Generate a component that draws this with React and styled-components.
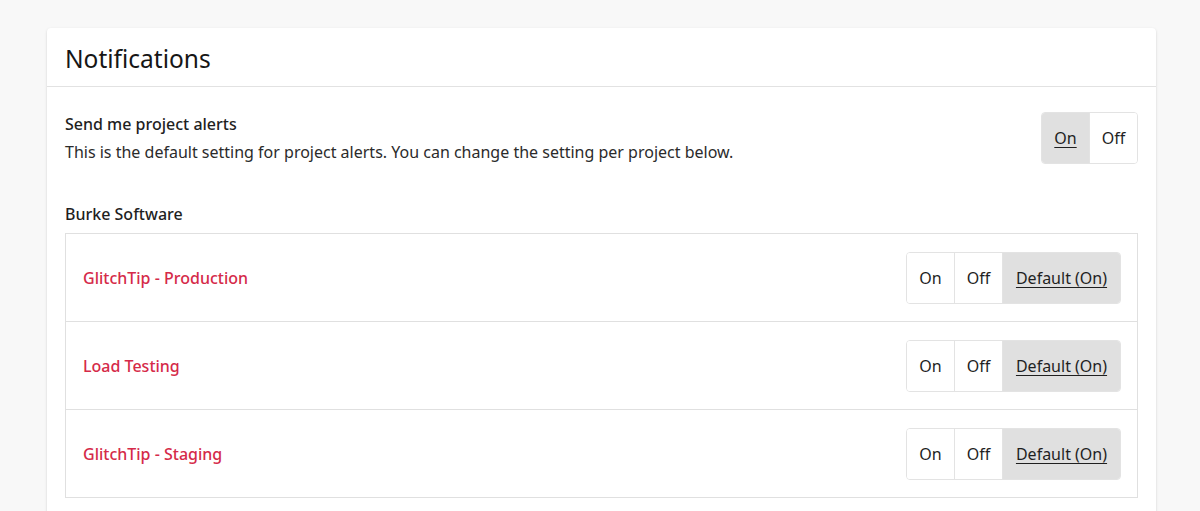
import React from "react";
import styled, { createGlobalStyle } from "styled-components";

const GlobalStyle = createGlobalStyle`
  body {
    margin: 0;
    background: #f8f8f8;
    font-family: "Noto Sans", "Open Sans", sans-serif;
    color: #1f1f1f;
  }
`;

const Page = styled.div`
  padding: 28px 44px 0 47px;
  height: 511px;
  box-sizing: border-box;
  overflow: hidden;
`;

const Card = styled.section`
  background: #fff;
  border-radius: 4px;
  box-shadow: 0 1px 3px rgba(0, 0, 0, 0.12), 0 1px 2px rgba(0, 0, 0, 0.06);
  min-height: 600px;
`;

const Header = styled.div`
  height: 59px;
  display: flex;
  align-items: center;
  padding: 2px 18px 0;
  box-sizing: border-box;
  border-bottom: 1px solid #e2e2e2;
`;

const Title = styled.h1`
  margin: 0;
  font-size: 24.5px;
  font-weight: 400;
  color: #161616;
`;

const Body = styled.div`
  padding: 25px 18px 0 18px;
`;

const DefaultRow = styled.div`
  display: flex;
  justify-content: space-between;
  align-items: flex-start;
`;

const Label = styled.div`
  font-size: 16px;
  font-weight: 500;
  line-height: 24px;
`;

const Help = styled.div`
  font-size: 16px;
  line-height: 32px;
  color: #2b2b2b;
`;

const OrgName = styled(Label)`
  margin: 34px 0 7px;
`;

const List = styled.div`
  border: 1px solid #e0e0e0;
`;

const ProjectRow = styled.div`
  height: 87px;
  display: flex;
  align-items: center;
  justify-content: space-between;
  padding: 0 16px 0 17px;
  border-top: ${(p) => (p.$first ? "none" : "1px solid #e0e0e0")};
`;

const ProjectName = styled.a`
  color: #d52a49;
  font-size: 16px;
  font-weight: 500;
  text-decoration: none;
`;

const Toggle = styled.div`
  display: flex;
  height: 52px;
  box-sizing: border-box;
  border: 1px solid #e3e3e3;
  border-radius: 4px;
  overflow: hidden;
`;

const Segment = styled.button`
  font-family: inherit;
  font-size: 16px;
  color: #1f1f1f;
  border: none;
  border-left: ${(p) => (p.$first ? "none" : "1px solid #e3e3e3")};
  background: ${(p) => (p.$active ? "#e0e0e0" : "#fff")};
  text-decoration: ${(p) => (p.$active ? "underline" : "none")};
  text-underline-offset: 3px;
  padding: 0;
  width: ${(p) => p.$w}px;
  cursor: pointer;
`;

const projects = ["GlitchTip - Production", "Load Testing", "GlitchTip - Staging"];

export default function App() {
  return (
    <>
      <GlobalStyle />
      <Page>
        <Card>
          <Header>
            <Title>Notifications</Title>
          </Header>
          <Body>
            <DefaultRow>
              <div>
                <Label>Send me project alerts</Label>
                <Help>
                  This is the default setting for project alerts. You can change the setting per
                  project below.
                </Help>
              </div>
              <Toggle>
                <Segment $first $active $w={47}>On</Segment>
                <Segment $w={48}>Off</Segment>
              </Toggle>
            </DefaultRow>
            <OrgName>Burke Software</OrgName>
            <List>
              {projects.map((name, i) => (
                <ProjectRow key={name} $first={i === 0}>
                  <ProjectName href="#">{name}</ProjectName>
                  <Toggle>
                    <Segment $first $w={47}>On</Segment>
                    <Segment $w={48}>Off</Segment>
                    <Segment $active $w={118}>Default (On)</Segment>
                  </Toggle>
                </ProjectRow>
              ))}
            </List>
          </Body>
        </Card>
      </Page>
    </>
  );
}
